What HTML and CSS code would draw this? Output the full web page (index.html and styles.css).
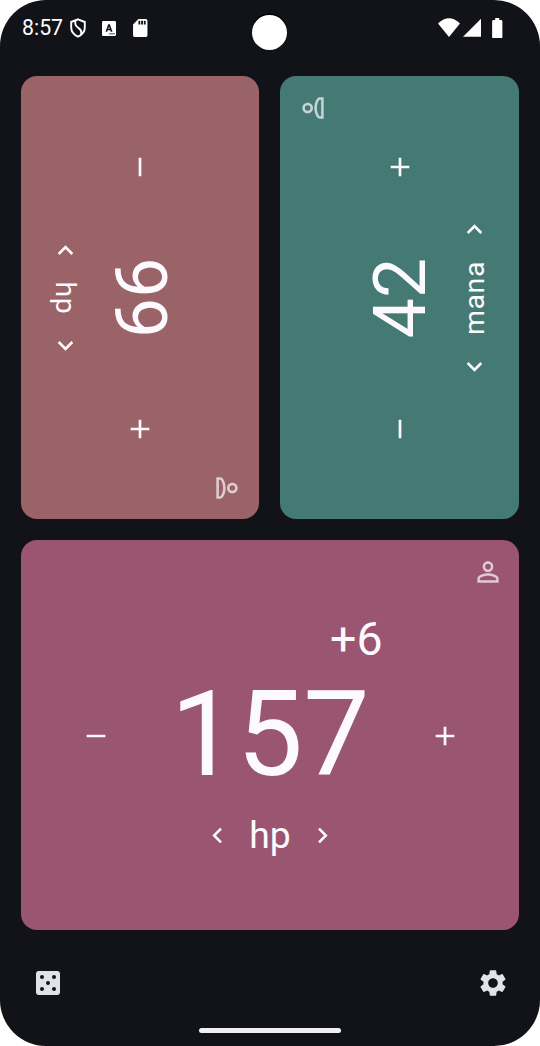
FILE: index.html
```html
<!DOCTYPE html>
<html lang="en">
<head>
<meta charset="utf-8">
<title>Life counter</title>
<link rel="stylesheet" href="styles.css">
</head>
<body>
<svg class="defs" aria-hidden="true">
  <symbol id="add" viewBox="0 0 24 24"><path d="M19 13h-6v6h-2v-6H5v-2h6V5h2v6h6z"/></symbol>
  <symbol id="remove" viewBox="0 0 24 24"><path d="M19 13H5v-2h14z"/></symbol>
  <symbol id="prev" viewBox="0 0 24 24"><path d="M15.41 16.59 10.83 12l4.58-4.59L14 6l-6 6 6 6z"/></symbol>
  <symbol id="next" viewBox="0 0 24 24"><path d="M8.59 16.59 13.17 12 8.59 7.41 10 6l6 6-6 6z"/></symbol>
  <symbol id="person" viewBox="0 0 24 24"><path d="M12 5.9a2.1 2.1 0 1 1 0 4.2 2.1 2.1 0 0 1 0-4.2m0 9c2.97 0 6.1 1.46 6.1 2.1v1.1H5.9V17c0-.64 3.13-2.1 6.1-2.1M12 4C9.79 4 8 5.79 8 8s1.79 4 4 4 4-1.79 4-4-1.79-4-4-4m0 9c-2.67 0-8 1.34-8 4v3h16v-3c0-2.66-5.33-4-8-4"/></symbol>
</svg>
<div class="screen">
  <header class="status">
    <span class="time">8:57</span>
    <svg class="shield" viewBox="0 0 16 20"><path class="line" d="M8 1.3 14.8 4v5.6c0 4-2.7 7.3-6.8 9-4.100-1.700-6.800-5-6.800-9V4zM5.300 2.600v3.200c0 2 1.200 2.900 3 4.100 2 1.300 3 2.500 3 4.400 0 .8-.2 1.500-.5 2.200"/></svg>
    <svg class="keyboard" viewBox="0 0 14 15"><rect width="14" height="15" rx="1.300"/><path class="cut" d="m3.500 10.800 2.700-7.500h1.600l2.700 7.500H8.700l-.5-1.600H5.700l-.5 1.600zm2.700-3h1.500L7 5.400zM7 12.500h6v.8H7z"/></svg>
    <svg class="sd" viewBox="4 2 16 20"><path d="M18 2h-8L4.020 8 4 20c0 1.100.9 2 2 2h12c1.100 0 2-.9 2-2V4c0-1.100-.9-2-2-2m-6 6h-2V4h2zm3 0h-2V4h2zm3 0h-2V4h2z"/></svg>
    <span class="camera"></span>
    <svg class="wifi" viewBox="0 0 22 19"><path d="M0 5.500Q11-5 22 5.500L11 19z"/></svg>
    <svg class="signal" viewBox="0 0 19 19"><path d="M19 0v19H0z"/></svg>
    <svg class="battery" viewBox="7 2 10 20"><path d="M15.670 4H14V2h-4v2H8.330C7.600 4 7 4.600 7 5.330v15.330C7 21.400 7.600 22 8.330 22h7.330c.74 0 1.340-.6 1.340-1.330V5.330C17 4.600 16.400 4 15.670 4"/></svg>
  </header>

  <main class="board">
    <section class="card rose">
      <div class="panel turn-right">
        <div class="top"><svg class="icon player"><use href="#person"/></svg></div>
        <div class="counter"><svg class="icon"><use href="#remove"/></svg><span class="value">99</span><svg class="icon"><use href="#add"/></svg></div>
        <div class="selector"><svg class="icon"><use href="#prev"/></svg><span>hp</span><svg class="icon"><use href="#next"/></svg></div>
      </div>
    </section>
    <section class="card teal">
      <div class="panel turn-left">
        <div class="top"><svg class="icon player"><use href="#person"/></svg></div>
        <div class="counter"><svg class="icon"><use href="#remove"/></svg><span class="value">42</span><svg class="icon"><use href="#add"/></svg></div>
        <div class="selector"><svg class="icon"><use href="#prev"/></svg><span>mana</span><svg class="icon"><use href="#next"/></svg></div>
      </div>
    </section>
    <section class="card plum">
      <div class="panel large">
        <div class="top"><span class="delta">+6</span><svg class="icon player"><use href="#person"/></svg></div>
        <div class="counter"><svg class="icon"><use href="#remove"/></svg><span class="value">157</span><svg class="icon"><use href="#add"/></svg></div>
        <div class="selector"><svg class="icon"><use href="#prev"/></svg><span>hp</span><svg class="icon"><use href="#next"/></svg></div>
      </div>
    </section>
  </main>

  <footer class="actions">
    <svg class="icon" viewBox="0 0 24 24"><path fill-rule="evenodd" d="M19 3H5c-1.100 0-2 .9-2 2v14c0 1.100.9 2 2 2h14c1.100 0 2-.9 2-2V5c0-1.100-.9-2-2-2M7.500 18a1.500 1.500 0 1 1 0-3 1.500 1.500 0 0 1 0 3m0-9a1.500 1.500 0 1 1 0-3 1.500 1.500 0 0 1 0 3m4.500 4.500a1.500 1.500 0 1 1 0-3 1.500 1.500 0 0 1 0 3m4.500 4.500a1.500 1.500 0 1 1 0-3 1.500 1.500 0 0 1 0 3m0-9a1.500 1.500 0 1 1 0-3 1.500 1.500 0 0 1 0 3"/></svg>
    <svg class="icon" viewBox="0 0 24 24"><path d="M19.140 12.940c.04-.3.06-.61.06-.94 0-.32-.02-.64-.07-.94l2.030-1.580c.18-.14.23-.41.12-.61l-1.920-3.320c-.12-.22-.37-.29-.59-.22l-2.390.96c-.5-.38-1.030-.7-1.620-.94l-.36-2.540c-.04-.24-.24-.41-.48-.41h-3.840c-.24 0-.43.17-.47.41l-.36 2.540c-.59.24-1.130.57-1.620.94l-2.390-.96c-.22-.08-.47 0-.59.22L2.740 8.870c-.12.21-.08.47.12.61l2.030 1.580c-.05.3-.09.63-.09.94s.02.64.07.94l-2.030 1.580c-.18.14-.23.41-.12.610l1.920 3.320c.12.22.37.29.59.22l2.390-.96c.5.38 1.030.7 1.620.94l.36 2.540c.05.24.24.41.48.41h3.840c.24 0 .44-.17.47-.41l.36-2.540c.59-.24 1.130-.56 1.620-.94l2.390.96c.22.08.47 0 .59-.22l1.920-3.320c.12-.22.07-.47-.12-.61zM12 15.600c-1.980 0-3.600-1.620-3.600-3.600s1.620-3.600 3.600-3.600 3.600 1.620 3.600 3.600-1.620 3.600-3.600 3.600"/></svg>
  </footer>
  <div class="home"></div>
</div>
</body>
</html>
```
FILE: styles.css
```css
* { box-sizing: border-box; }
body { margin: 0; background: #fff; font-family: Roboto, "Liberation Sans", sans-serif; color: #fdfaff; }
svg { display: block; fill: currentColor; flex: none; }
.defs { position: absolute; width: 0; height: 0; }

.screen {
  position: relative;
  display: flex;
  flex-direction: column;
  width: 540px;
  height: 1046px;
  border-radius: 46px;
  background: #121318;
  overflow: hidden;
}

.status { display: flex; align-items: center; height: 56px; padding-left: 22px; flex: none; color: #fff; }
.time { width: 48px; font-size: 21.300px; line-height: 56px; }
.shield { width: 16px; height: 20px; margin-right: 16px; }
.keyboard { width: 14px; height: 15px; margin-right: 17px; }
.sd { width: 14.500px; height: 18px; }
.wifi { width: 22px; height: 19px; margin: -2px 2.500px 0 auto; }
.signal { width: 18.500px; height: 19px; margin: -2px 9.500px 0 0; }
.battery { width: 12.500px; height: 20.500px; margin-right: 37px; }
.line { fill: none; stroke: currentColor; stroke-width: 1.900; }
.cut { fill: #121318; fill-rule: evenodd; }
.camera {
  position: absolute;
  left: 252px;
  top: 15px;
  width: 35px;
  height: 35px;
  border-radius: 50%;
  background: #fff;
  box-shadow: 0 -1.500px 0 #000;
}

.board {
  display: grid;
  grid-template: 443px 390px / 238px 239px;
  gap: 21px;
  padding: 20.300px 21px 0;
  flex: none;
}
.card { display: grid; place-content: center; border-radius: 16px; overflow: hidden; }
.rose { background: #9a6368; }
.teal { background: #457a74; }
.plum { background: #9a5570; grid-column: span 2; }

.panel {
  display: grid;
  grid-template-rows: 65px 108px 40px;
  width: 442px;
  height: 238px;
}
.turn-right { transform: rotate(90deg); }
.turn-left { transform: rotate(-90deg); }
.icon { width: 32px; height: 32px; }
.top { display: flex; justify-content: flex-end; padding: 16px 15px 0 0; }
.player { opacity: .7; }
.counter { display: grid; grid-template-columns: 180px 82px 180px; align-items: center; justify-items: center; }
.value { font-size: 71.500px; line-height: 84px; padding-top: 1.500px; }
.selector { display: flex; align-items: center; justify-content: center; gap: 16px; font-size: 28.500px; letter-spacing: .6px; }
.selector .icon { width: 31px; height: 31px; }

.large { grid-template-rows: 135px 121px 78px; width: 498px; height: 390px; }
.large .top { justify-content: space-between; padding: 16px 15px 0 309px; }
.large .delta { font-size: 46.500px; line-height: 54px; margin-top: 56px; }
.large .counter { grid-template-columns: 149px 200px 149px; }
.large .value { font-size: 118px; line-height: 121px; padding: 0; }
.large .selector { gap: 16.500px; font-size: 37.300px; letter-spacing: 0; }

.actions { display: flex; justify-content: space-between; padding: 37px 31.500px 0; color: #e2e2e9; }
.home { width: 142px; height: 5px; margin: auto auto 13px; border-radius: 3px; background: #f1f1f3; }
```
